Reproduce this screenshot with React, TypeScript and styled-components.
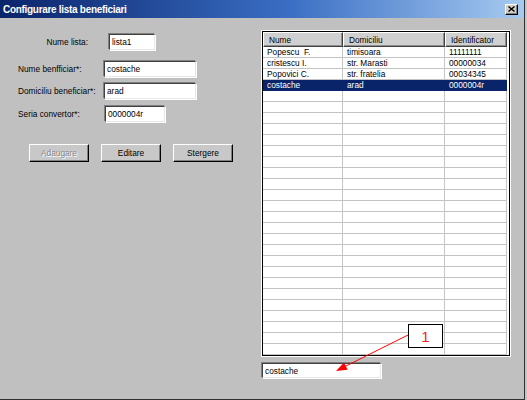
import React from "react";
import styled, { createGlobalStyle } from "styled-components";

const GlobalStyle = createGlobalStyle`
  html, body {
    margin: 0;
    padding: 0;
    background: #c6c6c6;
  }
  * {
    box-sizing: border-box;
  }
`;

const UI_FONT = `"Liberation Sans", Arial, sans-serif`;

const Window = styled.div`
  position: relative;
  width: 525px;
  height: 400px;
  background: #c0c0c0;
  border-right: 1px solid #303030;
  border-bottom: 1px solid #303030;
  font-family: ${UI_FONT};
  font-size: 8.3px;
  color: #000;
  display: flex;
  flex-direction: column;
  overflow: hidden;
`;

const TitleBar = styled.div`
  height: 18px;
  display: flex;
  align-items: center;
  padding-left: 3px;
  background: linear-gradient(90deg, #0a246a 0%, #3a6ec4 55%, #a6caf0 100%);
`;

const Title = styled.span`
  color: #fff;
  font-weight: bold;
  font-size: 10px;
  letter-spacing: -0.3px;
`;

const CloseButton = styled.div`
  margin-left: auto;
  margin-right: 6px;
  width: 13px;
  height: 11px;
  background: #d4d0c8;
  border: 1px solid;
  border-color: #fff #000 #000 #fff;
  box-shadow: inset -1px -1px 0 #808080;
  display: flex;
  align-items: center;
  justify-content: center;
`;

const Body = styled.div`
  flex: 1;
  display: flex;
`;

const FormPanel = styled.div`
  width: 258px;
  display: flex;
  flex-direction: column;
  padding-top: 8px;
`;

const FormRow = styled.div<{ $top: number }>`
  display: flex;
  align-items: center;
  height: 16px;
  margin-top: ${(p) => p.$top}px;
`;

const FieldLabel = styled.label<{ $width: number; $align?: "left" | "right" }>`
  width: ${(p) => p.$width}px;
  text-align: ${(p) => p.$align ?? "left"};
  padding-left: ${(p) => (p.$align === "right" ? 0 : 18)}px;
  white-space: nowrap;
`;

const TextField = styled.input<{ $width: number; $gap?: number }>`
  width: ${(p) => p.$width}px;
  height: 16px;
  margin: 0 0 0 ${(p) => p.$gap ?? 0}px;
  padding: 0 2px;
  font-family: ${UI_FONT};
  font-size: 8.3px;
  color: #000;
  background: #fff;
  border: 1px solid;
  border-color: #404040 #e8e8e8 #e8e8e8 #404040;
  box-shadow: -1px -1px 0 #808080, 1px 1px 0 #fff;
  outline: none;
`;

const ButtonRow = styled.div`
  display: flex;
  gap: 12px;
  margin-top: 22px;
  padding-left: 29px;
`;

const PushButton = styled.button`
  width: 60px;
  height: 18px;
  padding: 0;
  font-family: ${UI_FONT};
  font-size: 8.3px;
  color: #000;
  background: #c8c8c8;
  border: 1px solid;
  border-color: #fff #000 #000 #fff;
  box-shadow: inset -1px -1px 0 #808080;

  &:disabled {
    color: #8a8a8a;
    text-shadow: 1px 1px 0 #fff;
  }
`;

const ListPanel = styled.div`
  display: flex;
  flex-direction: column;
  padding-top: 12px;
  margin-left: 3px;
`;

const ListFrame = styled.div`
  width: 250px;
  height: 327px;
  border: 1px solid #fff;
`;

const ListView = styled.div`
  height: 100%;
  border: 1px solid #000;
  background: #fff;
  overflow: hidden;
  display: grid;
  grid-template-columns: 80px 102px 62px;
  grid-auto-rows: 11px;
  grid-template-rows: 15px;
  align-content: start;
`;

const HeaderCell = styled.div`
  height: 15px;
  padding-left: 5px;
  display: flex;
  align-items: center;
  background: #d0d0d0;
  border: 1px solid;
  border-color: #fff #404040 #404040 #fff;
  box-shadow: inset -1px -1px 0 #909090;
  white-space: nowrap;
`;

const Cell = styled.div<{ $selected?: boolean }>`
  height: 11px;
  line-height: 10px;
  padding-left: 4px;
  white-space: pre;
  overflow: hidden;
  border-right: 1px solid ${(p) => (p.$selected ? "transparent" : "#c4c4c4")};
  border-bottom: 1px solid ${(p) => (p.$selected ? "transparent" : "#c4c4c4")};
  background: ${(p) => (p.$selected ? "#0a246a" : "transparent")};
  color: ${(p) => (p.$selected ? "#fff" : "#000")};
`;

const SearchField = styled(TextField)`
  margin-top: 6px;
  margin-left: 1px;
  height: 15px;
`;

const Callout = styled.div`
  position: absolute;
  left: 408px;
  top: 324px;
  width: 35px;
  height: 24px;
  background: #fff;
  border: 1px solid #000;
  color: #f0202c;
  font-family: ${UI_FONT};
  font-size: 15px;
  display: flex;
  align-items: center;
  justify-content: center;
`;

const ArrowLayer = styled.svg`
  position: absolute;
  left: 0;
  top: 0;
  pointer-events: none;
`;

interface Beneficiar {
  nume: string;
  domiciliu: string;
  id: string;
}

const beneficiari: Beneficiar[] = [
  { nume: "Popescu  F.", domiciliu: "timisoara", id: "11111111" },
  { nume: "cristescu I.", domiciliu: "str. Marasti", id: "00000034" },
  { nume: "Popovici C.", domiciliu: "str. fratelia", id: "00034345" },
  { nume: "costache", domiciliu: "arad", id: "0000004r" },
];

const TOTAL_ROWS = 28;
const SELECTED = 3;

export default function App() {
  const rows = Array.from({ length: TOTAL_ROWS }, (_, i) => beneficiari[i] ?? null);

  return (
    <>
      <GlobalStyle />
      <Window>
        <TitleBar>
          <Title>Configurare lista beneficiari</Title>
          <CloseButton>
            <svg width="7" height="6" viewBox="0 0 7 6">
              <path d="M0.5 0.5 L6.5 5.5 M6.5 0.5 L0.5 5.5" stroke="#000" strokeWidth="1.4" />
            </svg>
          </CloseButton>
        </TitleBar>
        <Body>
          <FormPanel>
            <FormRow $top={8}>
              <FieldLabel $width={88} $align="right">Nume lista:</FieldLabel>
              <TextField $width={46} $gap={21} defaultValue="lista1" readOnly />
            </FormRow>
            <FormRow $top={11}>
              <FieldLabel $width={104}>Nume benfficiar*:</FieldLabel>
              <TextField $width={92} defaultValue="costache" readOnly />
            </FormRow>
            <FormRow $top={6}>
              <FieldLabel $width={104}>Domiciliu beneficiar*:</FieldLabel>
              <TextField $width={92} defaultValue="arad" readOnly />
            </FormRow>
            <FormRow $top={7}>
              <FieldLabel $width={105}>Seria convertor*:</FieldLabel>
              <TextField $width={60} defaultValue="0000004r" readOnly />
            </FormRow>
            <ButtonRow>
              <PushButton disabled>Adaugare</PushButton>
              <PushButton>Editare</PushButton>
              <PushButton>Stergere</PushButton>
            </ButtonRow>
          </FormPanel>
          <ListPanel>
            <ListFrame>
              <ListView>
                <HeaderCell>Nume</HeaderCell>
                <HeaderCell>Domiciliu</HeaderCell>
                <HeaderCell>Identificator</HeaderCell>
                {rows.map((r, i) => (
                  <React.Fragment key={i}>
                    <Cell $selected={i === SELECTED}>{r?.nume ?? ""}</Cell>
                    <Cell $selected={i === SELECTED}>{r?.domiciliu ?? ""}</Cell>
                    <Cell $selected={i === SELECTED}>{r?.id ?? ""}</Cell>
                  </React.Fragment>
                ))}
              </ListView>
            </ListFrame>
            <SearchField $width={119} defaultValue="costache" readOnly />
          </ListPanel>
        </Body>
        <Callout>1</Callout>
        <ArrowLayer width="525" height="400" viewBox="0 0 525 400">
          <line x1="408" y1="335" x2="345" y2="366.5" stroke="#ff0000" strokeWidth="1" />
          <polygon points="336,371 347.6,369.7 344,362.5" fill="#ff0000" />
        </ArrowLayer>
      </Window>
    </>
  );
}
